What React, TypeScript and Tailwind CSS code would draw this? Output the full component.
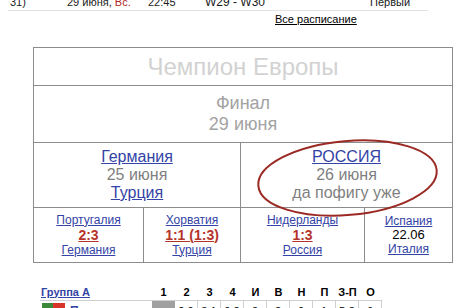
import React from "react";

const link = "text-[#3343a6] underline";
const score = "text-[#b5342a] font-bold underline text-[14px]";

export default function App() {
  return (
    <div className="relative w-[464px] h-[308px] overflow-hidden bg-white text-[#222]" style={{ fontFamily: '"Liberation Sans", Arial, sans-serif' }}>
      {/* top schedule row */}
      <div className="-mt-[4px] ml-[8px] w-[420px] h-[15px] border-b border-[#e2e2e2] flex items-start pl-[2px] text-[11px] leading-[13px] text-[#1a1a1a]">
        <span className="w-[57px]">31)</span>
        <span className="w-[81px]">29 июня, <span className="text-[#b3241c]">Вс.</span></span>
        <span className="w-[57px]">22:45</span>
        <span className="w-[165px] text-[12px]">W29 - W30</span>
        <span>Первый</span>
      </div>
      <div className="mt-[2px] ml-[275px] text-[11px] leading-[13px] text-black underline">Все расписание</div>

      {/* bracket box */}
      <div className="mt-[21px] ml-[33px] w-[420px] border border-[#8c8c8c] text-center">
        <div className="h-[38px] flex items-center justify-center text-[24px] leading-[28px] text-[#d2d2d2] border-b border-[#8c8c8c]">Чемпион Европы</div>
        <div className="h-[57px] border-b border-[#8c8c8c] flex flex-col items-center justify-center text-[18px] leading-[21px] text-[#a3a3a3]">
          <div>Финал</div>
          <div>29 июня</div>
        </div>
        <div className="h-[65px] border-b border-[#8c8c8c] flex text-[16px] leading-[18px] text-[#7f7f7f]">
          <div className="w-[207px] border-r border-[#8c8c8c] flex flex-col items-center justify-center">
            <span className={link}>Германия</span>
            <span>25 июня</span>
            <span className={link}>Турция</span>
          </div>
          <div className="flex-1 flex flex-col items-center justify-center">
            <span className={link}>РОССИЯ</span>
            <span>26 июня</span>
            <span>да пофигу уже</span>
          </div>
        </div>
        <div className="h-[54px] flex text-[12px] leading-[15px]">
          <div className="w-[110px] border-r border-[#8c8c8c] flex flex-col items-center justify-center">
            <span className={link}>Португалия</span>
            <span className={score}>2:3</span>
            <span className={link}>Германия</span>
          </div>
          <div className="w-[97px] border-r border-[#8c8c8c] flex flex-col items-center justify-center">
            <span className={link}>Хорватия</span>
            <span className={score}>1:1 (1:3)</span>
            <span className={link}>Турция</span>
          </div>
          <div className="w-[124px] border-r border-[#8c8c8c] flex flex-col items-center justify-center">
            <span className={link}>Нидерланды</span>
            <span className={score}>1:3</span>
            <span className={link}>Россия</span>
          </div>
          <div className="flex-1 flex flex-col items-center justify-center leading-[14px]">
            <span className={link}>Испания</span>
            <span className="text-[13px] text-black">22.06</span>
            <span className={link}>Италия</span>
          </div>
        </div>
      </div>

      {/* group table */}
      <div className="mt-[21px] ml-[40px] w-[342px] text-[11px] font-bold">
        <div className="h-[17px] flex items-center border-b border-[#cfcfcf] leading-[17px]">
          <span className="w-[112px] pl-[1px] text-[#3343a6] underline">Группа А</span>
          {["1", "2", "3", "4", "И", "В", "Н", "П", "З-П", "О"].map((h) => (
            <span key={h} className="w-[23px] text-center text-black">{h}</span>
          ))}
        </div>
        <div className="h-[20px] flex items-stretch font-normal">
          <div className="w-[112px] flex items-start pt-[2px] pl-[2px]">
            <span className="w-[11px] h-[14px] bg-[#3a8a3a]" />
            <span className="w-[12px] h-[14px] bg-[#d8352a]" />
            <span className="ml-[5px] text-[#3343a6] underline text-[12px] leading-[16px] font-bold">Португалия</span>
          </div>
          <div className="w-[23px] bg-[#a0a0a0]" />
          {["2:0", "3:1", "0:2", "3", "2", "0", "1", "5-3", "6"].map((c, i) => (
            <div key={i} className="w-[23px] border-r border-[#cfcfcf] text-center pt-[3px] text-[11px] leading-[14px] text-black">{c}</div>
          ))}
        </div>
      </div>

      {/* hand-drawn ellipse */}
      <svg className="absolute left-0 top-0 pointer-events-none" width="464" height="308">
        <ellipse cx="347.5" cy="178" rx="89.5" ry="37" fill="none" stroke="#9b2a24" strokeWidth="2" transform="rotate(-5 347.5 178)" />
      </svg>
    </div>
  );
}
